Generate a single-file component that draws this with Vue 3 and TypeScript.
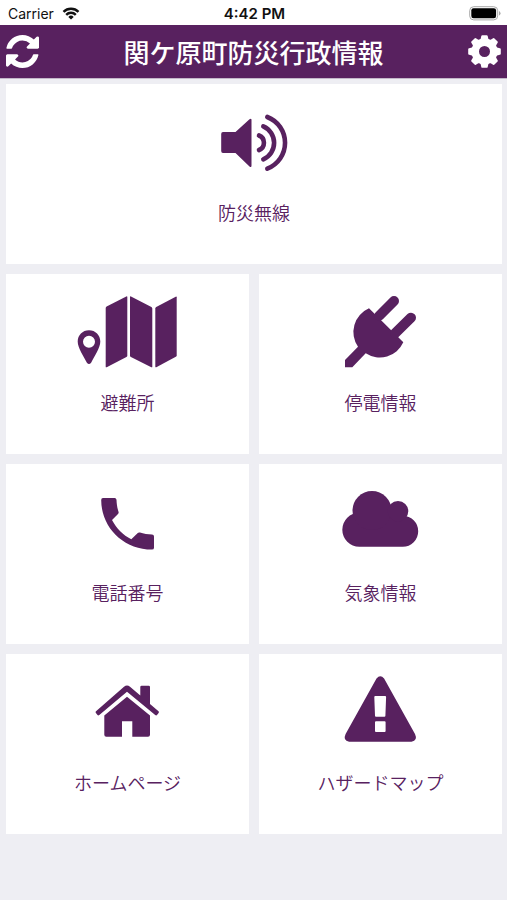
<script setup lang="ts">
interface Shape {
  d: string
  line?: number
}

interface Tile {
  id: string
  label: string
  wide?: boolean
  shapes: Shape[]
}

const tiles: Tile[] = [
  {
    id: 'radio',
    label: '防災無線',
    wide: true,
    shapes: [
      { d: 'M24 28H36.500L50.500 15.200Q52.500 13.800 52.500 16V61.500Q52.500 64 50.500 62.500L36.500 49H24Q22.200 49 22.200 47V30Q22.200 28 24 28Z' },
      { d: 'M60 31.500A7.800 7.800 0 0 1 60 46', line: 4.6 },
      { d: 'M64.300 22.300A18 18 0 0 1 64.300 55.300', line: 4.6 },
      { d: 'M68.300 13A27.700 27.700 0 0 1 68.300 64.700', line: 4.6 },
    ],
  },
  {
    id: 'shelter',
    label: '避難所',
    shapes: [
      { d: 'M33.700 14Q33.700 13 34.600 12.500L54.300 2.500Q55.300 2 55.300 3V61.500Q55.300 62.500 54.400 63L34.700 73.200Q33.700 73.700 33.700 72.500Z' },
      { d: 'M58 3Q58 2 59 2.500L79.400 13Q80.300 13.500 80.300 14.500V72.700Q80.300 73.700 79.300 73.200L58.900 63Q58 62.500 58 61.500Z' },
      { d: 'M83.300 14.500Q83.300 13.500 84.200 13L103.700 2.700Q104.700 2.200 104.700 3.200V61.200Q104.700 62.200 103.800 62.700L84.300 73.200Q83.300 73.700 83.300 72.700Z' },
      { d: 'M17 36.300C10.500 36.300 5.700 41.200 5.700 47.500C5.700 54 11.500 62 14.900 68.700Q17 71.500 19.100 68.700C22.500 62 28.300 54 28.300 47.500C28.300 41.200 23.500 36.300 17 36.300ZM17 41.700A6 6 0 1 1 17 53.700A6 6 0 1 1 17 41.700Z' },
    ],
  },
  {
    id: 'outage',
    label: '停電情報',
    shapes: [
      { d: 'M44 14.300L78.300 48.300A25.800 25.800 0 0 1 40.700 59.300L27.300 73.300H20V66L33 52.700A25.800 25.800 0 0 1 44 14.300Z' },
      { d: 'M54.300 21.700L69 7M70 39.300L86 23.700', line: 10 },
    ],
  },
  {
    id: 'phone',
    label: '電話番号',
    shapes: [
      { d: 'M31 14H42.600Q44.300 14 44.500 15.800C44.700 20 45.200 24 46.500 27.700Q47 29 46 30L40 36C44.500 44.500 51 51 59.300 55.300L65.500 49.200Q66.500 48.200 68 48.600C71.500 49.900 76 50.500 80 50.600Q82 50.700 82 52.500V63.700Q82 65.600 80 65.600C51.500 65.600 29.200 43.500 29.200 16Q29.200 14 31 14Z' },
    ],
  },
  {
    id: 'weather',
    label: '気象情報',
    shapes: [
      { d: 'M34.300 28.700A17 17 0 0 0 34.300 62.700H77.700A15.500 15.500 0 0 0 77.700 31.700Z' },
      { d: 'M27.500 26.500A19.500 19.500 0 0 1 66.500 26.500A19.500 19.500 0 0 1 27.500 26.500Z' },
      { d: 'M62.700 27.300A10.300 10.300 0 0 1 83.300 27.300A10.300 10.300 0 0 1 62.700 27.300Z' },
    ],
  },
  {
    id: 'website',
    label: 'ホームページ',
    shapes: [
      { d: 'M24 37.300L52 12.700Q55 10.400 58 12.700L68.300 21.500V13Q68.300 11.700 69.600 11.700H76.700Q78 11.700 78 13V30L86.500 37.300Q87.400 38.100 86.600 39L85.200 40.800Q84.300 41.900 83.200 41L55 17.800L27.300 41Q26.200 41.900 25.300 40.800L23.900 39Q23.100 38.100 24 37.300Z' },
      { d: 'M55 22.800L78 41.500V60.700Q78 62.700 76 62.700H60.300V47.300H50V62.700H34.300Q32.300 62.700 32.300 60.700V41.500Z' },
    ],
  },
  {
    id: 'hazard',
    label: 'ハザードマップ',
    shapes: [
      { d: 'M51.500 4.500Q55.300 0 59.100 4.500L90 60Q93 66.500 86.500 67.700H24.100Q17.600 66.500 20.600 60ZM50.300 22Q49.300 22 49.300 23L50 41.700Q50 42.700 51 42.700H59.400Q60.400 42.700 60.400 41.700L61.100 23Q61.100 22 60.100 22ZM51 47.300Q50 47.300 50 48.300V57Q50 58 51 58H59.600Q60.600 58 60.600 57V48.300Q60.600 47.300 59.600 47.300Z' },
    ],
  },
]
</script>

<template>
  <div class="app">
    <div class="status">
      <div class="carrier">
        <span>Carrier</span>
        <svg class="wifi" viewBox="0 0 18 13" aria-hidden="true">
          <path d="M1.500 4.900A10.600 10.600 0 0 1 16.500 4.900" />
          <path d="M4.200 7.800A6.800 6.800 0 0 1 13.800 7.800" />
          <path class="dot" d="M9 12.600L6.300 9.900A3.800 3.800 0 0 1 11.700 9.900Z" />
        </svg>
      </div>
      <span class="time">4:42 PM</span>
      <svg class="battery" viewBox="0 0 32 15" aria-hidden="true">
        <rect class="shell" x="0.700" y="0.700" width="28" height="13.200" rx="4" />
        <rect x="2.300" y="2.300" width="24.800" height="10" rx="2.200" />
        <path class="cap" d="M30 5A2.500 2.500 0 0 1 30 9.600Z" />
      </svg>
    </div>

    <header class="bar">
      <button type="button" class="tool" aria-label="更新">
        <svg viewBox="0 0 1536 1536" aria-hidden="true">
          <path d="M1511 928q0 5-1 7-64 268-268 434.500t-478 166.500q-146 0-282.500-55t-243.500-157l-129 129q-19 19-45 19t-45-19-19-45v-448q0-26 19-45t45-19h448q26 0 45 19t19 45-19 45l-137 137q71 66 161 102t187 36q134 0 250-65t186-179q11-17 53-117 8-23 30-23h192q13 0 22.500 9.500t9.500 22.500zm25-800v448q0 26-19 45t-45 19h-448q-26 0-45-19t-19-45 19-45l138-138q-148-137-349-137-134 0-250 65t-186 179q-11 17-53 117-8 23-30 23h-199q-13 0-22.500-9.500t-9.500-22.500v-7q65-268 270-434.500t480-166.500q146 0 284 55.500t245 156.500l130-129q19-19 45-19t45 19 19 45z" />
        </svg>
      </button>
      <h1>関ケ原町防災行政情報</h1>
      <button type="button" class="tool" aria-label="設定">
        <svg viewBox="-16.500 -16.500 33 33" aria-hidden="true">
          <circle class="ring" r="9.200" />
          <path
            v-for="n in 8"
            :key="n"
            d="M-5 -11.500L-3.900 -12.600L-3.200 -15.400Q-3 -16.300 -2.200 -16.300H2.200Q3 -16.300 3.200 -15.400L3.900 -12.600L5 -11.500Z"
            :transform="`rotate(${n * 45})`"
          />
        </svg>
      </button>
    </header>

    <main class="grid">
      <button
        v-for="tile in tiles"
        :key="tile.id"
        type="button"
        class="tile"
        :class="{ wide: tile.wide }"
      >
        <svg class="icon" viewBox="0 0 111 80" aria-hidden="true">
          <path
            v-for="(shape, i) in tile.shapes"
            :key="i"
            :d="shape.d"
            :class="{ line: shape.line }"
            :stroke-width="shape.line"
          />
        </svg>
        <span class="label">{{ tile.label }}</span>
      </button>
    </main>
  </div>
</template>

<style>
body {
  background: #eeeef3;
}
</style>

<style scoped>
.app {
  min-height: 100vh;
  background: #eeeef3;
  color: #58215f;
  font-family: Inter, "Noto Sans CJK JP", sans-serif;
}

.status {
  display: grid;
  grid-template-columns: 1fr auto 1fr;
  align-items: center;
  height: 25px;
  padding: 2px 6px 0 8px;
  box-sizing: border-box;
  background: #fff;
  color: #111;
  font-size: 14px;
  line-height: 20px;
}

.carrier {
  display: flex;
  align-items: center;
  gap: 8px;
}

.wifi {
  width: 18px;
  height: 13px;
  fill: none;
  stroke: #111;
  stroke-width: 2.400;
}

.wifi .dot {
  fill: #111;
  stroke: none;
}

.time {
  font-size: 15px;
  font-weight: 600;
}

.battery {
  justify-self: end;
  width: 32px;
  height: 15px;
  fill: #000;
}

.battery .shell {
  fill: none;
  stroke: #a9a9a9;
}

.battery .cap {
  fill: #a9a9a9;
}

.bar {
  display: flex;
  align-items: center;
  justify-content: space-between;
  height: 54px;
  padding: 0 6px;
  box-sizing: border-box;
  border-bottom: 1px solid #c4b8c9;
  background: #58215f;
  color: #fff;
}

.bar h1 {
  margin: 0;
  font-family: "Noto Sans CJK JP", sans-serif;
  font-size: 26px;
  font-weight: 500;
  line-height: 36px;
  white-space: nowrap;
}

.tool {
  display: flex;
  padding: 0;
  border: 0;
  background: none;
  color: inherit;
  cursor: pointer;
}

.tool svg {
  width: 33px;
  height: 33px;
  fill: currentColor;
}

.tool .ring {
  fill: none;
  stroke: currentColor;
  stroke-width: 7.400;
}

.grid {
  display: grid;
  grid-template-columns: 1fr 1fr;
  gap: 10px;
  padding: 5px 5px 10px 6px;
}

.tile {
  display: flex;
  flex-direction: column;
  align-items: center;
  gap: 16px;
  height: 180px;
  padding: 20px 0 0;
  border: 0;
  background: #fff;
  color: inherit;
  cursor: pointer;
}

.wide {
  grid-column: 1 / -1;
}

.icon {
  width: 111px;
  height: 80px;
  fill: currentColor;
  fill-rule: evenodd;
}

.icon .line {
  fill: none;
  stroke: currentColor;
  stroke-linecap: round;
}

.label {
  font-family: "Noto Sans CJK JP", sans-serif;
  font-size: 18px;
  font-weight: 350;
  line-height: 24px;
}
</style>
